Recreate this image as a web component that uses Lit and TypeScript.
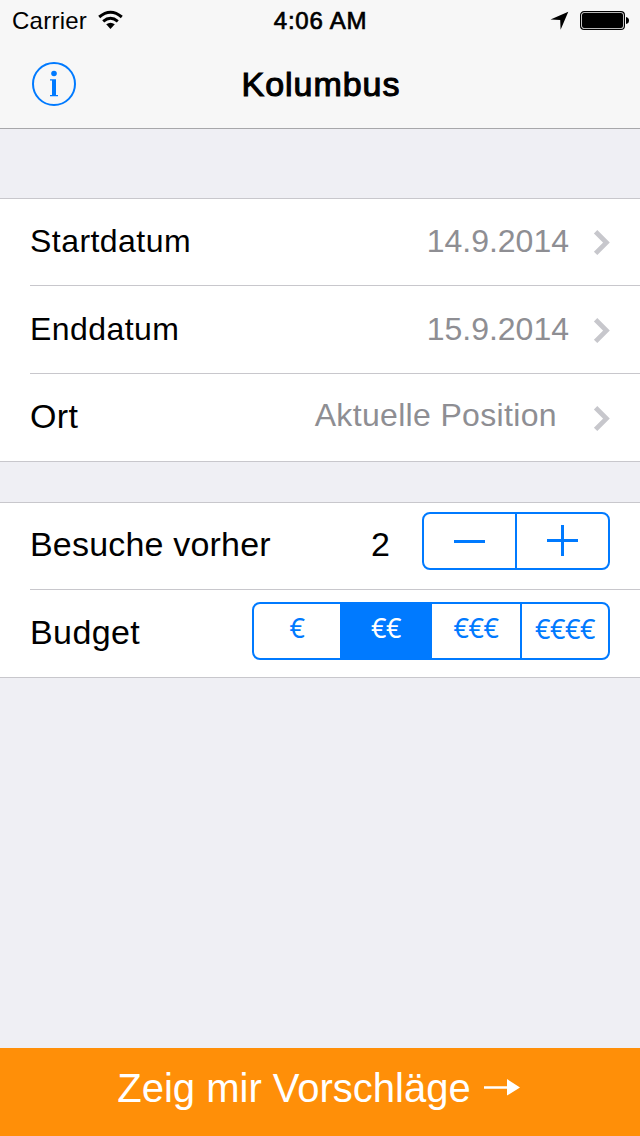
import { LitElement, html, css } from "lit";
import { customElement, state } from "lit/decorators.js";
import { classMap } from "lit/directives/class-map.js";

@customElement("app-root")
export class AppRoot extends LitElement {
  static styles = css`
    :host {
      display: flex;
      flex-direction: column;
      width: 640px;
      height: 1136px;
      background: #efeff4;
      color: #000;
      font-family: "Liberation Sans", Arial, sans-serif;
      overflow: hidden;
    }
    svg { display: block; flex: none; }
    .header {
      box-sizing: border-box;
      height: 129px;
      flex: none;
      background: #f7f7f7;
      border-bottom: 1px solid #a7a7aa;
    }
    .status {
      display: grid;
      grid-template-columns: 1fr auto 1fr;
      height: 40px;
      padding: 0 11px 0 12px;
      font-size: 24px;
      line-height: 41px;
    }
    .carrier { display: flex; letter-spacing: 0.25px; }
    .wifi { margin: 10px 0 0 11px; }
    .clock { letter-spacing: 0.75px; -webkit-text-stroke: 0.7px #000; }
    .power { display: flex; justify-content: flex-end; }
    .locate { margin: 11px 11px 0 0; }
    .battery { margin-top: 10px; }
    .nav {
      display: grid;
      grid-template-columns: 1fr auto 1fr;
      align-items: center;
      height: 88px;
      padding: 0 32px;
    }
    .info { margin-bottom: 1px; }
    .title {
      font-size: 34px;
      line-height: 86px;
      letter-spacing: 0.95px;
      -webkit-text-stroke: 1.1px #000;
      padding: 0 0 1px 2px;
    }
    .group {
      flex: none;
      background: #fff;
      border-top: 1px solid #c8c7cc;
      border-bottom: 1px solid #c8c7cc;
    }
    .group.first { margin: 69px 0 40px; }
    .row {
      box-sizing: border-box;
      display: flex;
      align-items: center;
      height: 88px;
      margin-left: 30px;
      padding-right: 30px;
      border-bottom: 1px solid #c8c7cc;
      font-size: 32px;
      letter-spacing: 0.45px;
    }
    .row:first-child { height: 87px; }
    .row:last-child { height: 87px; border-bottom: 0; }
    .label { flex: 1; padding-bottom: 1px; }
    .big { font-size: 34px; letter-spacing: 0.4px; padding-bottom: 2px; }
    .visits { letter-spacing: 0.19px; padding-bottom: 3px; }
    .value { color: #8e8e93; letter-spacing: 0; padding-bottom: 1px; margin-right: 24px; }
    .value.place { letter-spacing: 0.34px; padding-bottom: 5px; margin-right: 36px; }
    .row + .row .chevron { margin-top: 1px; }
    .count { font-size: 34px; letter-spacing: 0; padding-bottom: 3px; margin-right: 32px; }
    .stepper, .segments {
      box-sizing: border-box;
      height: 58px;
      border: 2px solid #007aff;
      border-radius: 8px;
      color: #007aff;
      overflow: hidden;
    }
    .stepper { display: flex; width: 188px; margin-bottom: 10px; }
    .segments {
      display: grid;
      grid-template-columns: 86px 92px 88px 88px;
      width: 358px;
      margin-bottom: 5px;
    }
    .step { flex: 1; display: flex; justify-content: center; }
    .step svg { margin-right: 1px; }
    .step + .step { border-left: 2px solid #007aff; }
    .seg {
      text-align: center;
      font-family: "Noto Sans", sans-serif;
      font-size: 27px;
      letter-spacing: -0.5px;
      line-height: 48px;
    }
    .seg.on { background: #007aff; color: #fff; }
    .seg:last-child { line-height: 50px; border-left: 2px solid #007aff; }
    .action {
      display: flex;
      justify-content: center;
      height: 88px;
      margin-top: auto;
      padding-right: 2px;
      background: #ff8f08;
      color: #fff;
      font-size: 40px;
      line-height: 80px;
    }
    .arrow { margin: 30px 0 0 12px; }
  `;

  @state() private budget = 1;
  @state() private visits = 2;

  private chevron() {
    return html`<svg class="chevron" width="17" height="27" viewBox="0 0 17 27">
      <path d="M2.600 2.800 L13.400 13.600 L2.600 24.400" fill="none" stroke="#c7c7cc" stroke-width="4.800" />
    </svg>`;
  }

  private row(label: string, value: string, place = false) {
    return html`<div class="row">
      <span class=${classMap({ label: true, big: place })}>${label}</span>
      <span class=${classMap({ value: true, place })}>${value}</span>
      ${this.chevron()}
    </div>`;
  }

  render() {
    return html`
      <div class="header">
        <div class="status">
          <div class="carrier">
            <span>Carrier</span>
            <svg class="wifi" width="26" height="20" viewBox="0 0 26 20">
              <g fill="none" stroke="#000" stroke-width="3">
                <path d="M1.200 7 Q12.500 -2.500 23.800 7" />
                <path d="M5.200 11.300 Q12.500 5.200 19.800 11.300" />
              </g>
              <path d="M8.200 14.300 Q12.500 11.200 16.800 14.300 L12.500 19 Z" />
            </svg>
          </div>
          <span class="clock">4:06 AM</span>
          <div class="power">
            <svg class="locate" width="19" height="19" viewBox="0 0 19 19">
              <path d="M18.300 0.700 L10.600 18.700 L10.200 8.900 L0.500 8.400 Z" />
            </svg>
            <svg class="battery" width="49" height="20" viewBox="0 0 49 20">
              <rect x="0.600" y="1.600" width="43.800" height="17.800" rx="3.500" fill="none" stroke="#000" stroke-width="1.200" />
              <rect x="2" y="3" width="41" height="15" rx="2" />
              <path d="M46 7 Q49 7.500 49 10.500 Q49 13.500 46 14 Z" />
            </svg>
          </div>
        </div>
        <div class="nav">
          <svg class="info" width="44" height="44" viewBox="0 0 44 44" fill="#007aff">
            <circle cx="22" cy="22" r="21" fill="none" stroke="#007aff" stroke-width="2" />
            <circle cx="22" cy="11.500" r="2.800" />
            <path d="M18 17.200 H24 V33 H26 V34.300 H18 V33 H20 V18.500 H18 Z" />
          </svg>
          <span class="title">Kolumbus</span>
        </div>
      </div>
      <div class="group first">
        ${this.row("Startdatum", "14.9.2014")}
        ${this.row("Enddatum", "15.9.2014")}
        ${this.row("Ort", "Aktuelle Position", true)}
      </div>
      <div class="group">
        <div class="row">
          <span class="label big visits">Besuche vorher</span>
          <span class="count">${this.visits}</span>
          <div class="stepper">
            <div class="step" @click=${() => (this.visits = Math.max(0, this.visits - 1))}>
              <svg width="32" height="54" viewBox="0 0 32 54"><path d="M1 27.500 H32" stroke="#007aff" stroke-width="3" /></svg>
            </div>
            <div class="step" @click=${() => this.visits++}>
              <svg width="32" height="54" viewBox="0 0 32 54"><path d="M1 26.500 H32 M16.500 11 V42" stroke="#007aff" stroke-width="3" /></svg>
            </div>
          </div>
        </div>
        <div class="row">
          <span class="label big">Budget</span>
          <div class="segments">
            ${[0, 1, 2, 3].map(
              (i) => html`<div class=${classMap({ seg: true, on: i === this.budget })} @click=${() => (this.budget = i)}>${"€".repeat(i + 1)}</div>`
            )}
          </div>
        </div>
      </div>
      <div class="action">
        <span>Zeig mir Vorschläge</span>
        <svg class="arrow" width="38" height="18" viewBox="0 0 38 18" fill="#fff">
          <path d="M1 8.200 H24 V1 L37 9.500 L24 17.500 V10.800 H1 Z" />
        </svg>
      </div>
    `;
  }
}
